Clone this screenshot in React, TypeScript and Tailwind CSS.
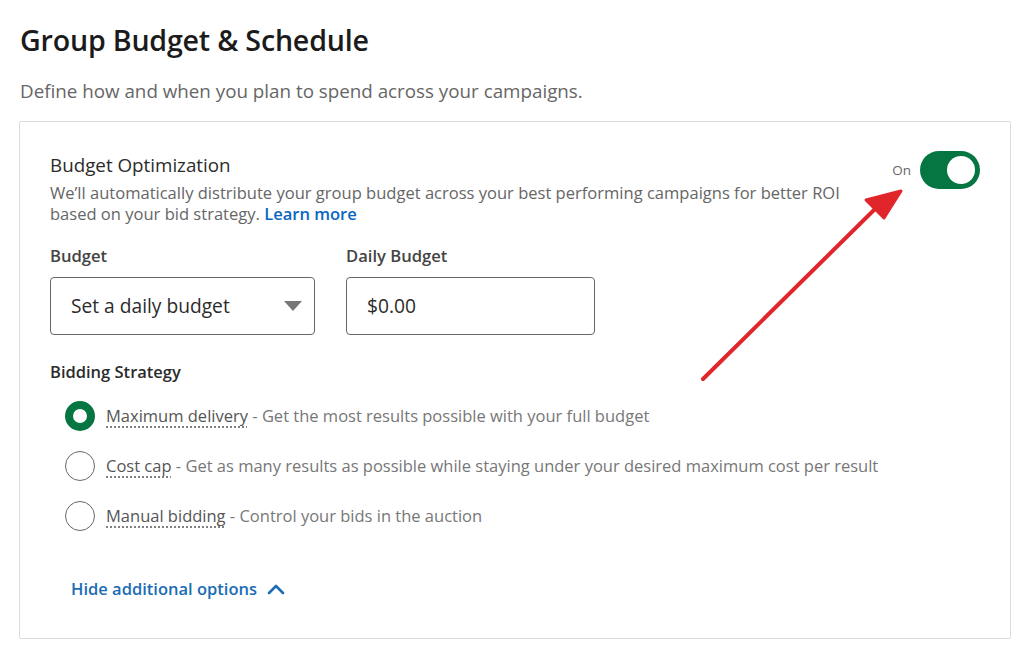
import React from 'react';

const options = [
  { name: 'Maximum delivery', desc: 'Get the most results possible with your full budget', checked: true },
  { name: 'Cost cap', desc: 'Get as many results as possible while staying under your desired maximum cost per result', checked: false },
  { name: 'Manual bidding', desc: 'Control your bids in the auction', checked: false },
];

function Radio({ checked }: { checked: boolean }) {
  if (checked) {
    return <span className="w-[30px] h-[30px] rounded-full border-[8px] border-[#057642] bg-white flex-shrink-0" />;
  }
  return <span className="w-[30px] h-[30px] rounded-full border-[1.5px] border-[#666] bg-white flex-shrink-0" />;
}

export default function App() {
  return (
    <div className="relative w-[1024px] h-[654px] bg-white overflow-hidden" style={{ fontFamily: '"Open Sans", "Noto Sans", sans-serif' }}>
      <div className="pl-[20px] pr-[14px] pt-[22px]">
        <h1 className="text-[28.6px] leading-[36px] font-semibold text-[#1b1b1b] tracking-[-0.2px]">Group Budget &amp; Schedule</h1>
        <p className="mt-[21px] text-[18.8px] leading-[24px] text-[#666]">Define how and when you plan to spend across your campaigns.</p>

        <div className="mt-[18px] ml-[-1px] w-[992px] h-[518px] border border-[#dcdcdc] rounded-[2px] pl-[30px] pr-[30px] pt-[30px]">
          {/* Budget Optimization */}
          <div className="flex items-start justify-between">
            <div>
              <div className="text-[18.8px] leading-[26px] text-[#2b2b2b]">Budget Optimization</div>
              <p className="mt-[4px] text-[16.55px] leading-[21px] text-[#666] w-[805px]">
                We’ll automatically distribute your group budget across your best performing campaigns for better ROI based on your bid strategy.{' '}
                <span className="text-[#0a66c2] font-semibold">Learn more</span>
              </p>
            </div>
            <div className="flex items-center gap-[9px] mt-[-1px]">
              <span className="text-[13.5px] text-[#666]">On</span>
              <span className="w-[60px] h-[38px] rounded-full bg-[#057642] flex items-center justify-end pr-[5px]">
                <span className="w-[28px] h-[28px] rounded-full bg-white" />
              </span>
            </div>
          </div>

          {/* Budget fields */}
          <div className="mt-[20px] flex gap-[31px]">
            <div>
              <div className="text-[16.6px] leading-[24px] font-semibold text-[#444]">Budget</div>
              <div className="mt-[9px] w-[265px] h-[58px] border border-[#666] rounded-[4px] flex items-center justify-between pl-[20px] pr-[12px]">
                <span className="text-[19.2px] text-[#2b2b2b]">Set a daily budget</span>
                <svg width="18" height="10" viewBox="0 0 18 10"><path d="M0 0 L18 0 L9 10 Z" fill="#777" /></svg>
              </div>
            </div>
            <div>
              <div className="text-[16.6px] leading-[24px] font-semibold text-[#444]">Daily Budget</div>
              <div className="mt-[9px] w-[249px] h-[58px] border border-[#666] rounded-[4px] flex items-center pl-[20px]">
                <span className="text-[19.2px] text-[#2b2b2b]">$0.00</span>
              </div>
            </div>
          </div>

          {/* Bidding */}
          <div className="mt-[25px] text-[16.5px] leading-[24px] font-semibold text-[#2b2b2b]">Bidding Strategy</div>
          <div className="mt-[17px] pl-[15px] flex flex-col gap-[20px]">
            {options.map((o) => (
              <div key={o.name} className="flex items-center gap-[11px] h-[30px]">
                <Radio checked={o.checked} />
                <span className="text-[16.5px] text-[#777] whitespace-nowrap">
                  <span className="text-[#555] underline decoration-dotted decoration-[#666] underline-offset-[5px]">{o.name}</span> - {o.desc}
                </span>
              </div>
            ))}
          </div>

          <div className="mt-[46px] pl-[21px] flex items-center gap-[10px] h-[24px]">
            <span className="text-[16.5px] font-semibold text-[#1b6cb5]">Hide additional options</span>
            <svg width="18" height="11" viewBox="0 0 18 11"><path d="M2 9 L9 2 L16 9" fill="none" stroke="#1b6cb5" strokeWidth="2.6" strokeLinecap="round" strokeLinejoin="round" /></svg>
          </div>
        </div>
      </div>

      {/* Red annotation arrow */}
      <svg className="absolute left-0 top-0 pointer-events-none" width="1024" height="654" viewBox="0 0 1024 654">
        <line x1="703" y1="379" x2="876" y2="208" stroke="#e0262a" strokeWidth="4" strokeLinecap="round" />
        <path d="M901 191 L866 200 L884 218 Z" fill="#e0262a" stroke="#e0262a" strokeWidth="3" strokeLinejoin="round" />
      </svg>
    </div>
  );
}
